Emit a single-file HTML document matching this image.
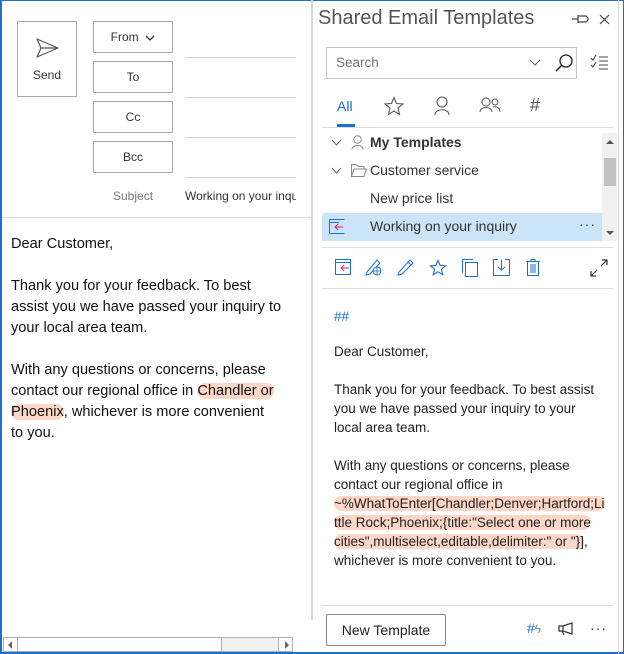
<!DOCTYPE html>
<html><head><style>
*{margin:0;padding:0;box-sizing:border-box}
body{width:624px;height:654px;background:#fff;font-family:"Segoe UI","Liberation Sans",sans-serif;color:#222;position:relative;overflow:hidden}
.a{position:absolute}
.frame{left:0;top:0;width:624px;height:654px;border:1px solid #1e6fc6;border-left-width:2px;border-bottom-width:2px}
.btn{position:absolute;border:1px solid #a8a8a8;background:#fff;font-size:12px;text-align:center;color:#333}
.hl{background:#fcd6c6;border-radius:8px}
.line{position:absolute;height:1px;background:#d0d0d0}
.lt{font-size:14.6px;line-height:21px;color:#111;white-space:nowrap}
.rt{font-size:13.5px;line-height:19px;color:#222;white-space:nowrap}
</style></head><body>
<div class="a frame"></div>
<div class="btn" style="left:17px;top:21px;width:60px;height:76px">
<svg width="24" height="20" viewBox="0 0 24 20" style="position:absolute;left:18px;top:16px"><path d="M1 1 L22 10 L1 19 L5 10 Z M5 10 H22" fill="none" stroke="#555" stroke-width="1.2" stroke-linejoin="round"/></svg>
<div class="a" style="left:0;right:0;top:46px">Send</div></div>
<div class="btn" style="left:93px;top:21px;width:80px;height:32px;line-height:30px">From&nbsp; <svg width="10" height="6" viewBox="0 0 10 6"><path d="M1 1 L5 5 L9 1" fill="none" stroke="#333" stroke-width="1.3"/></svg></div>
<div class="btn" style="left:93px;top:61px;width:80px;height:32px;line-height:30px">To</div>
<div class="btn" style="left:93px;top:101px;width:80px;height:32px;line-height:30px">Cc</div>
<div class="btn" style="left:93px;top:141px;width:80px;height:32px;line-height:30px">Bcc</div>
<div class="line" style="left:185px;top:57px;width:111px"></div>
<div class="line" style="left:185px;top:97px;width:111px"></div>
<div class="line" style="left:185px;top:137px;width:111px"></div>
<div class="line" style="left:185px;top:177px;width:111px"></div>
<div class="a" style="left:113px;top:189px;font-size:12px;color:#777">Subject</div>
<div class="a" style="left:185px;top:189px;font-size:12px;color:#333;width:111px;overflow:hidden;white-space:nowrap">Working on your inquiry</div>
<div class="line" style="left:2px;top:217px;width:310px;background:#ddd"></div>
<div class="a lt" style="left:11px;top:234px">Dear Customer,<br><br>Thank you for your feedback. To best<br>assist you we have passed your inquiry to<br>your local area team.<br><br>With any questions or concerns, please<br>contact our regional office in <span class="hl">Chandler or</span><br><span class="hl">Phoenix</span>, whichever is more convenient<br>to you.</div>
<div class="a" style="left:3px;top:637px;width:290px;height:15px;background:#f0f0f0;border:1px solid #b0b0b0"></div>
<div class="a" style="left:4px;top:638px;width:14px;height:13px;background:#fff;border-right:1px solid #b0b0b0"></div>
<div class="a" style="left:8px;top:641px;width:0;height:0;border:4px solid transparent;border-right:4px solid #666;border-left:0"></div>
<div class="a" style="left:18px;top:638px;width:204px;height:13px;background:#fff;border-right:1px solid #b0b0b0"></div>
<div class="a" style="left:278px;top:638px;width:14px;height:13px;background:#fff;border-left:1px solid #b0b0b0"></div>
<div class="a" style="left:285px;top:641px;width:0;height:0;border:4px solid transparent;border-left:4px solid #666;border-right:0"></div>
<div class="a" style="left:311px;top:0;width:2px;height:620px;background:#d6d6d6"></div>
<div class="a" style="left:618px;top:0;width:1px;height:654px;background:#d6d6d6"></div>
<div class="a" style="left:318px;top:7px;font-size:20px;color:#555">Shared Email Templates</div>
<svg class="a" style="left:572px;top:13px" width="18" height="12" viewBox="0 0 18 12"><path d="M0 6 H6 M6 2 V10 M6 3 H14 L16 5 V7 L14 9 H6" fill="none" stroke="#444" stroke-width="1.2"/></svg>
<svg class="a" style="left:599px;top:14px" width="11" height="11" viewBox="0 0 11 11"><path d="M1 1 L10 10 M10 1 L1 10" stroke="#444" stroke-width="1.2"/></svg>
<div class="a" style="left:326px;top:47px;width:251px;height:32px;border:1px solid #c4c4c4"></div>
<div class="a" style="left:336px;top:55px;font-size:13.5px;color:#777">Search</div>
<svg class="a" style="left:529px;top:59px" width="12" height="8" viewBox="0 0 12 8"><path d="M1 1 L6 6 L11 1" fill="none" stroke="#666" stroke-width="1.1"/></svg>
<svg class="a" style="left:554px;top:53px" width="20" height="20" viewBox="0 0 20 20"><circle cx="12" cy="8" r="6" fill="none" stroke="#222" stroke-width="1.3"/><path d="M8 12 L2 18" stroke="#222" stroke-width="1.5"/></svg>
<svg class="a" style="left:590px;top:54px" width="20" height="18" viewBox="0 0 20 18"><path d="M1 4 L3 6 L6 1 M1 11 L3 13 L6 8 M9 3 H18 M9 7 H18 M9 11 H18 M9 15 H18" fill="none" stroke="#444" stroke-width="1.1"/></svg>
<div class="a" style="left:337px;top:98px;font-size:14px;color:#1a6fd0">All</div>
<div class="a" style="left:337px;top:124px;width:18px;height:3px;background:#1a6fd0"></div>
<svg class="a" style="left:384px;top:96px" width="20" height="20" viewBox="0 0 20 20"><path d="M10 1.5 L12.5 7.5 L19 8 L14 12 L15.5 18.5 L10 15 L4.5 18.5 L6 12 L1 8 L7.5 7.5 Z" fill="none" stroke="#555" stroke-width="1.1"/></svg>
<svg class="a" style="left:434px;top:96px" width="16" height="20" viewBox="0 0 16 20"><circle cx="8" cy="6" r="5" fill="none" stroke="#555" stroke-width="1.1"/><path d="M1 19 C1 12 15 12 15 19" fill="none" stroke="#555" stroke-width="1.1"/></svg>
<svg class="a" style="left:479px;top:97px" width="22" height="16" viewBox="0 0 22 16"><circle cx="7" cy="5" r="4" fill="none" stroke="#555"/><path d="M1 15 C1 9 13 9 13 15" fill="none" stroke="#555"/><circle cx="16" cy="5" r="3" fill="none" stroke="#555"/><path d="M14 10 C18 9 21 11 21 15" fill="none" stroke="#555"/></svg>
<div class="a" style="left:530px;top:95px;font-size:18px;color:#555">#</div>
<div class="line" style="left:322px;top:127px;width:291px;background:#ddd"></div>
<svg class="a" style="left:331px;top:139px" width="11" height="7" viewBox="0 0 11 7"><path d="M1 1 L5.5 6 L10 1" fill="none" stroke="#666"/></svg>
<svg class="a" style="left:351px;top:135px" width="13" height="15" viewBox="0 0 13 15"><circle cx="6.5" cy="4.5" r="3.7" fill="none" stroke="#888"/><path d="M1 14.5 C1 9 12 9 12 14.5" fill="none" stroke="#888"/></svg>
<div class="a" style="left:370px;top:134px;font-size:14px;font-weight:bold;color:#333">My Templates</div>
<svg class="a" style="left:331px;top:167px" width="11" height="7" viewBox="0 0 11 7"><path d="M1 1 L5.5 6 L10 1" fill="none" stroke="#666"/></svg>
<svg class="a" style="left:351px;top:164px" width="16" height="13" viewBox="0 0 16 13"><path d="M0.5 12.5 V0.5 H5 L7 2.5 H13 V5 M0.5 12.5 L3 5 H15.5 L13 12.5 Z" fill="none" stroke="#888"/></svg>
<div class="a" style="left:370px;top:162px;font-size:14px;color:#333">Customer service</div>
<div class="a" style="left:370px;top:190px;font-size:14px;color:#333">New price list</div>
<div class="a" style="left:322px;top:213px;width:280px;height:28px;background:#cce4f7"></div>
<svg class="a" style="left:329px;top:219px" width="16" height="15" viewBox="0 0 16 15"><path d="M0.5 0.5 H15.5 M0.5 14.5 H15.5 M0.5 0.5 V14.5 M0.5 3.5 H10" fill="none" stroke="#1a6fd0"/><path d="M14 8 H6 M9 5 L6 8 L9 11" fill="none" stroke="#e0245e"/></svg>
<div class="a" style="left:370px;top:218px;font-size:14px;color:#333">Working on your inquiry</div>
<div class="a" style="left:579px;top:216px;font-size:14px;color:#444;letter-spacing:1px">···</div>
<div class="a" style="left:602px;top:133px;width:15px;height:108px;background:#f0f0f0"></div>
<div class="a" style="left:604px;top:158px;width:12px;height:28px;background:#c2c2c2"></div>
<div class="a" style="left:606px;top:140px;border:4px solid transparent;border-bottom:4px solid #555;border-top:0"></div>
<div class="a" style="left:606px;top:231px;border:4px solid transparent;border-top:4px solid #555;border-bottom:0"></div>
<div class="line" style="left:322px;top:247px;width:291px;background:#ddd"></div>
<svg class="a" style="left:335px;top:259px" width="16" height="16" viewBox="0 0 16 16"><path d="M0.5 0.5 H15.5 V15.5 H0.5 Z M0.5 3.5 H15.5" fill="none" stroke="#1a6fd0"/><path d="M14 9 H6 M9 6 L6 9 L9 12" fill="none" stroke="#e0245e"/></svg>
<svg class="a" style="left:365px;top:258px" width="18" height="18" viewBox="0 0 18 18"><path d="M2 14 L12 2 L15 5 L5 16 L1 17 Z" fill="none" stroke="#1a6fd0"/><circle cx="12" cy="13" r="4" fill="#fff" stroke="#1a6fd0"/><path d="M8 13 H16 M12 9 V17" stroke="#1a6fd0" stroke-width=".8"/></svg>
<svg class="a" style="left:397px;top:258px" width="17" height="18" viewBox="0 0 17 18"><path d="M2 14 L13 2 L16 5 L5 16 L1 17 Z M11 4 L14 7" fill="none" stroke="#1a6fd0"/></svg>
<svg class="a" style="left:429px;top:259px" width="18" height="17" viewBox="0 0 20 20"><path d="M10 1.5 L12.5 7.5 L19 8 L14 12 L15.5 18.5 L10 15 L4.5 18.5 L6 12 L1 8 L7.5 7.5 Z" fill="none" stroke="#1a6fd0" stroke-width="1.3"/></svg>
<svg class="a" style="left:462px;top:259px" width="16" height="18" viewBox="0 0 16 18"><path d="M0.5 0.5 H11 M0.5 0.5 V14 M3.5 3.5 H15.5 V17.5 H3.5 Z" fill="none" stroke="#1a6fd0"/></svg>
<svg class="a" style="left:493px;top:259px" width="17" height="17" viewBox="0 0 17 17"><path d="M5 0.5 H0.5 V16.5 H16.5 V0.5 H12 M8.5 0.5 V11 M5 8 L8.5 11 L12 8" fill="none" stroke="#1a6fd0"/></svg>
<svg class="a" style="left:526px;top:259px" width="14" height="17" viewBox="0 0 14 17"><path d="M0 2.5 H14 M5 2.5 V0.5 H9 V2.5 M1.5 2.5 V16.5 H12.5 V2.5 M5 5 V14 M7 5 V14 M9 5 V14" fill="none" stroke="#1a6fd0"/></svg>
<svg class="a" style="left:590px;top:259px" width="18" height="18" viewBox="0 0 18 18"><path d="M1 17 L7 11 M1 12 V17 H6 M17 1 L11 7 M12 1 H17 V6" fill="none" stroke="#333" stroke-width="1.2"/></svg>
<div class="line" style="left:322px;top:288px;width:291px;background:#ddd"></div>
<div class="a rt" style="left:334px;top:307px;color:#1a6fd0">##</div>
<div class="a rt" style="left:334px;top:342px">Dear Customer,<br><br>Thank you for your feedback. To best assist<br>you we have passed your inquiry to your<br>local area team.<br><br>With any questions or concerns, please<br>contact our regional office in<br><span class="hl">~%WhatToEnter[Chandler;Denver;Hartford;Li</span><br><span class="hl">ttle Rock;Phoenix;{title:"Select one or more</span><br><span class="hl">cities",multiselect,editable,delimiter:" or "}]</span>,<br>whichever is more convenient to you.</div>
<div class="line" style="left:322px;top:605px;width:291px;background:#ddd"></div>
<div class="a" style="left:326px;top:614px;width:120px;height:32px;border:1px solid #888;border-radius:2px;font-size:14px;text-align:center;line-height:30px;color:#222">New Template</div>
<div class="a" style="left:527px;top:620px;font-size:14px;color:#1a6fd0">#<span style="color:#888;font-size:12px">ϟ</span></div>
<svg class="a" style="left:558px;top:622px" width="18" height="14" viewBox="0 0 18 14"><path d="M1 4 H5 L14 1 V12 L5 9 H1 Z M5 4 V9 M4 9 L6 13" fill="none" stroke="#333" stroke-width="1.2"/></svg>
<div class="a" style="left:590px;top:620px;font-size:14px;color:#333;letter-spacing:1px">···</div>
</body></html>
